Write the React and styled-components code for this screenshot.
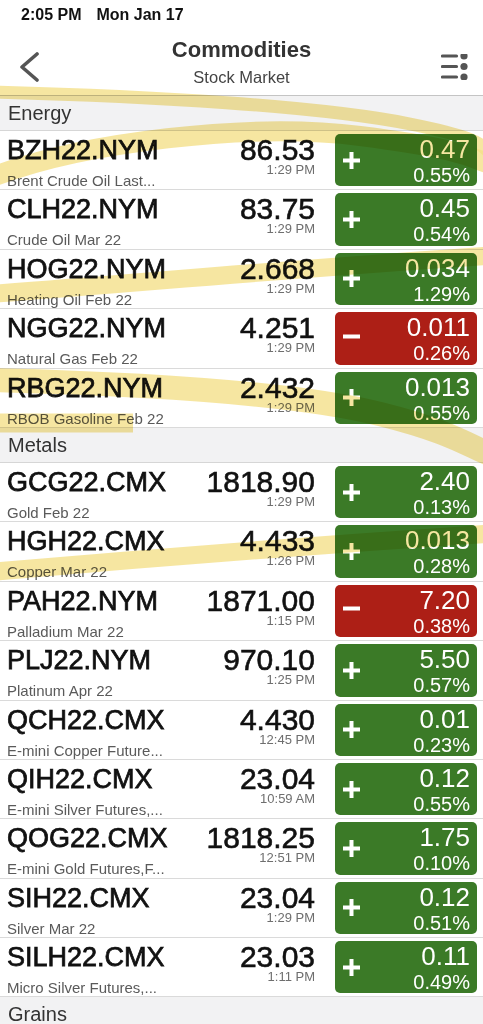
import styled, { createGlobalStyle } from 'styled-components'

const GlobalStyle = createGlobalStyle`
	html, body {
		margin: 0;
		padding: 0;
		background: #ffffff;
	}
	body {
		font-family: "Liberation Sans", Arial, Helvetica, sans-serif;
		color: #111;
	}
`

const Screen = styled.div`
	position: relative;
	width: 483px;
	height: 1024px;
	overflow: hidden;
	background: #ffffff;
`

const StatusBar = styled.div`
	height: 30px;
	line-height: 30px;
	padding-left: 21px;
	font-size: 16px;
	font-weight: 600;
	color: #111;
	display: flex;
	gap: 15px;
`

const NavBar = styled.div`
	height: 65px;
	display: grid;
	grid-template-columns: 70px 1fr 70px;
	border-bottom: 1px solid #c4c4c4;
`

const NavLeft = styled.div`
	padding: 22px 0 0 18px;
`

const NavRight = styled.div`
	display: flex;
	justify-content: flex-end;
	padding: 24px 15px 0 0;
`

const NavCenter = styled.div`
	text-align: center;
`

const Title = styled.div`
	margin-top: 8px;
	font-size: 22px;
	line-height: 24px;
	font-weight: 700;
	color: #333;
`

const Subtitle = styled.div`
	margin-top: 5px;
	font-size: 16.5px;
	line-height: 20px;
	color: #444;
`

const SectionHeader = styled.div`
	height: 35px;
	box-sizing: border-box;
	line-height: 34px;
	padding-left: 8px;
	font-size: 20px;
	color: #333;
	background: #f2f2f3;
	border-bottom: 1px solid #d6d6d6;
`

const Row = styled.div`
	height: 59.4px;
	box-sizing: border-box;
	display: flex;
	padding: 0 6px 0 7px;
	border-bottom: 1px solid #dadada;
`

const NameCol = styled.div`
	flex: 1;
	min-width: 0;
`

const Symbol = styled.div`
	margin-top: 4px;
	font-size: 27px;
	line-height: 30px;
	color: #111;
	-webkit-text-stroke: 0.75px #111;
	white-space: nowrap;
`

const Desc = styled.div`
	margin-top: 7px;
	font-size: 15px;
	line-height: 18px;
	color: #5a5a5a;
	white-space: nowrap;
`

const PriceCol = styled.div`
	width: 130px;
	margin-right: 20px;
	text-align: right;
`

const Price = styled.div`
	margin-top: 5px;
	font-size: 30px;
	line-height: 28px;
	color: #111;
	-webkit-text-stroke: 0.6px #111;
`

const Time = styled.div`
	font-size: 13px;
	line-height: 12px;
	color: #6e6e6e;
`

const Badge = styled.div`
	width: 142px;
	margin: 3px 0;
	box-sizing: border-box;
	border-radius: 5px;
	display: flex;
	justify-content: space-between;
	align-items: center;
	padding: 0 7px 0 8px;
	color: #ffffff;
	background: ${(props) => (props.$down ? '#ad1f16' : '#3b7a27')};
`

const Values = styled.div`
	align-self: flex-start;
	padding-top: 2px;
	text-align: right;
`

const Change = styled.div`
	font-size: 26px;
	line-height: 26px;
`

const Percent = styled.div`
	margin-top: 3px;
	font-size: 20px;
	line-height: 20px;
`

const Marker = styled.svg`
	position: absolute;
	left: 0;
	top: 0;
	pointer-events: none;
	mix-blend-mode: multiply;
`

const energy = [
	['BZH22.NYM', 'Brent Crude Oil Last...', '86.53', '1:29 PM', false, '0.47', '0.55%'],
	['CLH22.NYM', 'Crude Oil Mar 22', '83.75', '1:29 PM', false, '0.45', '0.54%'],
	['HOG22.NYM', 'Heating Oil Feb 22', '2.668', '1:29 PM', false, '0.034', '1.29%'],
	['NGG22.NYM', 'Natural Gas Feb 22', '4.251', '1:29 PM', true, '0.011', '0.26%'],
	['RBG22.NYM', 'RBOB Gasoline Feb 22', '2.432', '1:29 PM', false, '0.013', '0.55%'],
]

const metals = [
	['GCG22.CMX', 'Gold Feb 22', '1818.90', '1:29 PM', false, '2.40', '0.13%'],
	['HGH22.CMX', 'Copper Mar 22', '4.433', '1:26 PM', false, '0.013', '0.28%'],
	['PAH22.NYM', 'Palladium Mar 22', '1871.00', '1:15 PM', true, '7.20', '0.38%'],
	['PLJ22.NYM', 'Platinum Apr 22', '970.10', '1:25 PM', false, '5.50', '0.57%'],
	['QCH22.CMX', 'E-mini Copper Future...', '4.430', '12:45 PM', false, '0.01', '0.23%'],
	['QIH22.CMX', 'E-mini Silver Futures,...', '23.04', '10:59 AM', false, '0.12', '0.55%'],
	['QOG22.CMX', 'E-mini Gold Futures,F...', '1818.25', '12:51 PM', false, '1.75', '0.10%'],
	['SIH22.CMX', 'Silver Mar 22', '23.04', '1:29 PM', false, '0.12', '0.51%'],
	['SILH22.CMX', 'Micro Silver Futures,...', '23.03', '1:11 PM', false, '0.11', '0.49%'],
]

function Sign({ down }) {
	return (
		<svg width="17" height="17" viewBox="0 0 17 17" style={{ marginTop: down ? -4 : 0 }}>
			<rect x="0" y="6.5" width="17" height="4" fill="#fff" />
			{!down && <rect x="6.5" y="0" width="4" height="17" fill="#fff" />}
		</svg>
	)
}

function Quote({ item }) {
	const [symbol, desc, price, time, down, change, percent] = item
	return (
		<Row>
			<NameCol>
				<Symbol>{symbol}</Symbol>
				<Desc>{desc}</Desc>
			</NameCol>
			<PriceCol>
				<Price>{price}</Price>
				<Time>{time}</Time>
			</PriceCol>
			<Badge $down={down}>
				<Sign down={down} />
				<Values>
					<Change>{change}</Change>
					<Percent>{percent}</Percent>
				</Values>
			</Badge>
		</Row>
	)
}

function App() {
	return (
		<Screen>
			<GlobalStyle />
			<StatusBar>
				<span>2:05 PM</span>
				<span>Mon Jan 17</span>
			</StatusBar>
			<NavBar>
				<NavLeft>
					<svg width="22" height="30" viewBox="0 0 22 30">
						<polyline points="19,2 4,15 19,28" fill="none" stroke="#555" strokeWidth="3.6" strokeLinecap="round" strokeLinejoin="round" />
					</svg>
				</NavLeft>
				<NavCenter>
					<Title>Commodities</Title>
					<Subtitle>Stock Market</Subtitle>
				</NavCenter>
				<NavRight>
					<svg width="27" height="26" viewBox="0 0 27 26">
						<g stroke="#555" strokeWidth="3.2" strokeLinecap="round">
							<line x1="1.5" y1="2" x2="15.5" y2="2" />
							<line x1="1.5" y1="12.5" x2="15.5" y2="12.5" />
							<line x1="1.5" y1="23" x2="15.5" y2="23" />
						</g>
						<g fill="#555">
							<circle cx="23" cy="2" r="3.6" />
							<circle cx="23" cy="12.5" r="3.6" />
							<circle cx="23" cy="23" r="3.6" />
						</g>
					</svg>
				</NavRight>
			</NavBar>
			<SectionHeader>Energy</SectionHeader>
			{energy.map((item) => (
				<Quote key={item[0]} item={item} />
			))}
			<SectionHeader>Metals</SectionHeader>
			{metals.map((item) => (
				<Quote key={item[0]} item={item} />
			))}
			<SectionHeader>Grains</SectionHeader>
			{/* highlighter marks drawn over the list */}
			<Marker width="483" height="1024" viewBox="0 0 483 1024">
				<g fill="none" stroke="#f4e08a" strokeOpacity="0.8" strokeLinecap="round">
					<path d="M -10 92 C 150 96, 320 106, 410 124 S 475 148, 500 158" strokeWidth="13" />
					<path d="M -10 178 C 80 142, 250 122, 360 136 S 470 158, 500 168" strokeWidth="20" />
					<path d="M -10 294 C 150 282, 300 268, 500 255" strokeWidth="18" />
					<path d="M -10 380 C 150 384, 300 394, 380 414 S 470 448, 500 458" strokeWidth="24" />
					<path d="M -10 423 L 133 423" strokeWidth="19" strokeLinecap="butt" />
					<path d="M -10 572 C 150 558, 300 546, 500 533" strokeWidth="18" />
				</g>
			</Marker>
		</Screen>
	)
}

export default App
